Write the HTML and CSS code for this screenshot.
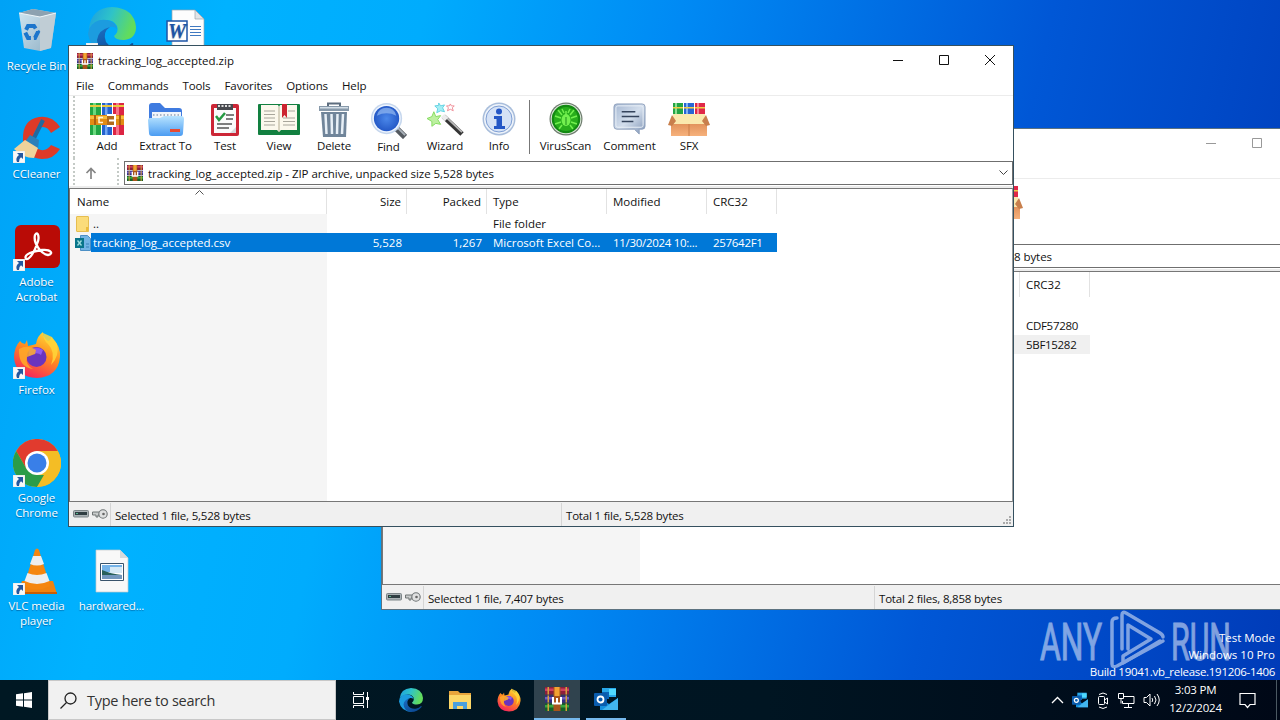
FILE: index.html
```
<!DOCTYPE html>
<html lang="en">
<head>
    <meta charset="UTF-8">
    <meta name="viewport" content="width=device-width, initial-scale=1.0">
    <title>tracking_log_accepted.zip</title>
    <link rel="stylesheet" href="styles.css">
</head>
<body>
    <!-- shared icons -->
    <svg class="defs" width="0" height="0">
        <defs>
            <linearGradient id="g-edge" x1="0" y1="0" x2="1" y2="0.3">
                <stop offset="0" stop-color="#1b9de2"/><stop offset="0.5" stop-color="#2fc3c8"/><stop offset="1" stop-color="#62dc5c"/>
            </linearGradient>
            <linearGradient id="g-edge2" x1="0" y1="0" x2="0.6" y2="1">
                <stop offset="0" stop-color="#1b6fc4"/><stop offset="1" stop-color="#0c4a94"/>
            </linearGradient>
            <linearGradient id="g-fox" x1="0.8" y1="0" x2="0.3" y2="1">
                <stop offset="0" stop-color="#ffe03c"/><stop offset="0.45" stop-color="#ff8f1f"/><stop offset="1" stop-color="#f5235c"/>
            </linearGradient>
            <linearGradient id="g-folder" x1="0" y1="0" x2="0" y2="1">
                <stop offset="0" stop-color="#b8e4ff"/><stop offset="1" stop-color="#4b9cf2"/>
            </linearGradient>
            <linearGradient id="g-steel" x1="0" y1="0" x2="1" y2="1">
                <stop offset="0" stop-color="#a4b7d2"/><stop offset="0.5" stop-color="#d3deec"/><stop offset="1" stop-color="#7e93b4"/>
            </linearGradient>
            <linearGradient id="g-box" x1="0" y1="0" x2="0" y2="1">
                <stop offset="0" stop-color="#e2935c"/><stop offset="1" stop-color="#f6b17c"/>
            </linearGradient>
            <radialGradient id="g-lens" cx="0.5" cy="0.5" r="0.6">
                <stop offset="0" stop-color="#4b88ea"/><stop offset="1" stop-color="#1d50c0"/>
            </radialGradient>
            <linearGradient id="g-bin" x1="0" y1="0" x2="1" y2="1">
                <stop offset="0" stop-color="#e8eef2"/><stop offset="1" stop-color="#9fb0bd"/>
            </linearGradient>
        </defs>
        <symbol id="i-rar" viewBox="0 0 24 24">
            <path fill="#8c1f3e" d="M0 0h24v7.500H0z"/><path fill="#d0405f" d="M0 1.500h24v2.500H0z"/>
            <path fill="#332f80" d="M0 8.500h24v7H0z"/><path fill="#6e5cc4" d="M0 10h24v2.500H0z"/>
            <path fill="#14602a" d="M0 16.500h24V24H0z"/><path fill="#38a83c" d="M0 18h24v2.500H0z"/>
            <path fill="#d5a03c" d="M2.500 0h1.500v7.500H2.500zM2.500 8.500h1.500v7H2.500zM2.500 16.500h1.500V24H2.500zM20.500 0h1.500v7.500h-1.500zM20.500 8.500h1.500v7h-1.500zM20.500 16.500h1.500V24h-1.500z"/>
            <path fill="#a8541a" d="M8.500 0h7v24h-7z"/><path fill="#f2a232" d="M9.500 0h5v9h-5z"/>
            <path fill="none" stroke="#fff" stroke-width="2" d="M8 10v6.500h8V10M12 11v5"/>
        </symbol>
        <symbol id="i-add" viewBox="0 0 34 34">
            <path fill="#22a544" d="M0 1h11v32H0z"/><path fill="#6bd97e" d="M3 1h3v32H3z"/>
            <path fill="#2462cf" d="M12 1h10v32H12z"/><path fill="#70a6f2" d="M15 1h2.500v32H15z"/>
            <path fill="#dc2443" d="M23 1h11v32H23z"/><path fill="#f5718a" d="M26 1h3v32h-3z"/>
            <path fill="#e9c83d" d="M0 3h11v2H0zM12 3h10v2H12zM23 3h11v2H23z"/>
            <path fill="#e28b14" d="M0 13h34v10H0z"/><path fill="#f9bd3e" d="M0 14h34v3H0z"/>
            <path fill="#ad5f0e" d="M4 13h2v10H4zM29 13h2v10h-2z"/>
            <path fill="none" stroke="#fff3d5" stroke-width="1.500" d="M13 15.500H9v5h4"/><path fill="#b06a1c" d="M17 13h8v10h-8z"/>
            <path fill="none" stroke="#fff" stroke-width="2" d="M17 13h8v11h-8M19 18.500h5"/>
        </symbol>
        <symbol id="i-extract" viewBox="0 0 36 34">
            <path fill="#3f7be0" d="M1 31V4q0-3 3-3h8l5 5h14q3 0 3 3v20z"/>
            <path fill="#f1f5fa" d="M4 10h29v13H4z"/><path stroke="#aab6c6" stroke-width="2" stroke-dasharray="1.500 2" d="M5 13h27"/>
            <path fill="url(#g-folder)" d="M0 18q0-2 2-2h10l4-2h17q3 0 3 3l-1 14q0 3-3 3H4q-3 0-3-3z"/>
            <path fill="#e64a33" d="M22 27h10v3H22z"/>
        </symbol>
        <symbol id="i-test" viewBox="0 0 32 34">
            <rect x="2" y="2" width="28" height="32" rx="2" fill="#cc2636"/>
            <path fill="#fbfbfb" d="M5 6h22v25H5z"/><path fill="#d5d9dd" d="M21 31l6-6v6z"/>
            <path fill="#47494e" d="M8 2h16v6H8z"/><path stroke="#ddd" stroke-width="2" stroke-dasharray="2 1.500" d="M9 4h14"/>
            <path fill="none" stroke="#259a42" stroke-width="2.500" d="M7 14l3 4 6-7"/>
            <path stroke="#555" stroke-width="1.300" d="M17 13h8M17 17h7M8 22h15M8 26h12"/>
        </symbol>
        <symbol id="i-view" viewBox="0 0 42 34">
            <rect y="2" width="42" height="31" rx="1" fill="#128040"/>
            <path fill="#fbf8ec" d="M3 3h17l1 2 1-2h17v25H23l-2 2-2-2H3z"/>
            <path stroke="#a8a69b" stroke-width="1" d="M6 9h11M6 12.500h11M6 16h11M6 19.500h11M6 23h11M30 9h7M25 16h12M25 19.500h12M25 23h12"/>
            <path stroke="#b4ad92" d="M21 5v25"/><path fill="#cc2430" d="M24 2h5v14l-2.500-3-2.500 3z"/>
        </symbol>
        <symbol id="i-delete" viewBox="0 0 32 36">
            <path fill="none" stroke="#5d6d7e" stroke-width="2" d="M10 4V1.500h12V4"/>
            <path fill="#8799aa" d="M1 4h30v5H1z"/><path fill="#d2dde6" d="M2 5h28v1.500H2z"/>
            <path fill="#70859a" d="M3 10h26l-1 25H5z"/>
            <path stroke="#e8f0f7" stroke-width="2.500" d="M7.500 12l1 20M13.500 12l.5 20M19.500 12l-.5 20M25 12l-1 20"/>
        </symbol>
        <symbol id="i-find" viewBox="0 0 38 38">
            <path stroke="#555a60" stroke-width="6" d="M26 26l10 10"/><path stroke="#aab2ba" stroke-width="2" d="M27 25l9 9"/>
            <circle cx="17" cy="17" r="16" fill="#c5d6ed"/><circle cx="17" cy="17" r="14.500" fill="#eef5ff"/>
            <circle cx="17" cy="17" r="13" fill="url(#g-lens)"/><path fill="#a5c8f7" opacity=".6" d="M7 14q2-8 10-8t10 8q-10-5-20 0z"/>
        </symbol>
        <symbol id="i-wizard" viewBox="0 0 38 36">
            <path stroke="#353535" stroke-width="5" d="M17 15l19 18"/><path stroke="#b8b8b8" stroke-width="2" d="M18 14l18 17"/><path stroke="#ececec" stroke-width="5" d="M16 14l4 4"/>
            <path fill="#bcf0a0" stroke="#86dc62" d="M7 10l2 5 5-1-3 4 3 5-5-1-4 3v-5l-5-3 5-2z"/>
            <path fill="#a5eff5" stroke="#62d2e2" d="M12 1l2 3 4-1-2 3 2 4-4-1-4 2 1-4-3-3 4-.5z"/>
            <path fill="#fff" stroke="#ef8d98" d="M24 2l1 2h3l-2 2 1 3-3-1.500L21 9l1-3-2-2h3z"/>
        </symbol>
        <symbol id="i-info" viewBox="0 0 34 34">
            <circle cx="17" cy="17" r="16.500" fill="#a8bddb"/><circle cx="17" cy="17" r="15" fill="#eef3fa"/><circle cx="17" cy="17" r="13" fill="#d5e2f6" stroke="#7f9fd4"/>
            <circle cx="17" cy="9.500" r="3" fill="#2457c6"/><path fill="#2457c6" d="M12 14h8v10h3v3H12v-3h2.500v-7H12z"/>
        </symbol>
        <symbol id="i-virus" viewBox="0 0 34 34">
            <circle cx="17" cy="17" r="16.500" fill="#6d7c6d"/><circle cx="17" cy="17" r="15.300" fill="#e2eae0"/><circle cx="17" cy="17" r="14.300" fill="#138a12"/><circle cx="17" cy="17" r="12" fill="#28ae1c"/>
            <path fill="none" stroke="#73f04f" stroke-width="1.500" d="M17 9v4M13 7l2 4M21 7l-2 4M6 14l6 2M28 14l-6 2M6 22l6-2M28 22l-6-2M9 8l4 5M25 8l-4 5M10 27l3-4M24 27l-3-4"/>
            <ellipse cx="17" cy="18" rx="4.500" ry="6" fill="#73f04f"/><path stroke="#1b8d18" d="M17 15v8"/>
        </symbol>
        <symbol id="i-comment" viewBox="0 0 34 34">
            <path fill="url(#g-steel)" stroke="#8ea0bc" d="M4 2h26q3 0 3 3v20q0 3-3 3h-3v5l-5-5H4q-3 0-3-3V5q0-3 3-3z"/>
            <path fill="none" stroke="#e9eff7" d="M5 4h24q2 0 2 2v18q0 2-2 2H5q-2 0-2-2V6q0-2 2-2z"/>
            <path stroke="#35445c" stroke-width="1.600" d="M9 10h14M9 15h18M9 20h12"/>
        </symbol>
        <symbol id="i-sfx" viewBox="0 0 42 34">
            <path fill="#23a545" d="M5 1h10v14H5z"/><path fill="#2866d4" d="M16 1h10v14H16z"/><path fill="#e02848" d="M27 1h10v14H27z"/>
            <path fill="#8cdf93" d="M7 1h2v12H7z"/><path fill="#81b1f2" d="M18 1h2v12h-2z"/><path fill="#f58296" d="M29 1h2v12h-2z"/><path fill="#f2cc48" d="M5 5h10v1.500H5zM16 5h10v1.500H16zM27 5h10v1.500H27z"/>
            <path fill="#fae9ae" d="M5 12h32v10H5z"/>
            <path fill="url(#g-box)" d="M3 22h36v12H3z"/><path fill="#c87f4c" d="M4 13L0 23l4 1 4-5zM38 13l4 10-4 1-4-5z"/><path stroke="#c97c49" d="M21 22v12"/>
        </symbol>
        <symbol id="i-disk" viewBox="0 0 16 8">
            <rect x=".5" y=".5" width="15" height="6.500" rx="1" fill="#aab2b5" stroke="#7d8588"/><path fill="#2f3d42" d="M2 2h12v3H2z"/><path fill="#55b58a" d="M3 3h2v1H3z"/>
        </symbol>
        <symbol id="i-key" viewBox="0 0 16 10">
            <path fill="#c9cccc" stroke="#6f7475" d="M.5 3h8v3H6v2H4V6H.5z"/><circle cx="11" cy="5" r="4.200" fill="#dfe0e0" stroke="#6f7475" stroke-width="1.100"/><circle cx="11.500" cy="5" r="1.300" fill="#666"/>
        </symbol>
        <symbol id="i-shortcut" viewBox="0 0 12 12">
            <path fill="#f8f8f8" stroke="#d4d4d4" stroke-width=".5" d="M0 0h12v12H0z"/><path fill="#24579e" d="M4 2h6v6L8 6.200Q5.500 8 6 11H4Q2 7 6 4z"/>
        </symbol>
        <symbol id="i-edge" viewBox="0 0 48 48">
            <path fill="url(#g-edge)" d="M1 22Q3 1 24 0q22 1 24 20 0 12-12 13-9 0-10-4 5-4 3-10-4-7-12-6Q5 14 1 22z"/>
            <path fill="#1c9cdf" d="M1 22q6-11 18-9 9 2 10 9-3-3-7-2-8 3-8 12 2 12 13 16Q4 48 0 27z"/>
            <path fill="url(#g-edge2)" d="M22 20q-8 5-4 15 6 8 17 6 5-1 9-5 2 0 1 2-8 10-21 10-14-2-15-15 1-10 13-13z"/>
        </symbol>
        <symbol id="i-firefox" viewBox="0 0 48 48">
            <path fill="url(#g-fox)" d="M7 10q2 3 5 3l2-4 1 6q5-1 8-2 1-8 7-12 0 6 5 9 3-1 3-4 10 9 9 20-2 20-23 21Q3 46 1 27q0-11 6-17z"/>
            <circle cx="23.500" cy="26" r="10" fill="#6a34bd"/><path fill="#9059ee" d="M16 19q8-5 14 0l-2 5q-4-4-12 1z"/>
            <path fill="#ffac28" d="M6 18q9-5 17 1l-1 4-8 3q-2 8 6 12Q5 36 6 18z" opacity=".85"/>
            <path fill="#ffd63a" d="M30 2q0 7 5 11 8 8 3 21 9-9 6-21l-5-7z" opacity=".85"/>
        </symbol>
        <symbol id="i-outlook" viewBox="0 0 24 24">
            <path fill="#28a8ea" d="M8 1h14v9H8z"/><path fill="#0a64b8" d="M8 5h7v7H8z"/><path fill="#50d9ff" d="M15 2h7v6h-7z"/>
            <path fill="#1490df" d="M6 11l9 6 9-6v12H6z"/><path fill="#42b5ee" d="M24 11v12H8z"/>
            <rect y="6" width="13" height="13" rx="1" fill="#0a5cad"/><circle cx="6.500" cy="12.500" r="3" fill="none" stroke="#fff" stroke-width="1.800"/>
        </symbol>
    </svg>

    <main class="desktop">
        <div class="shortcuts">
            <div class="shortcut">
                <svg width="48" height="48" viewBox="0 0 48 48">
                    <path fill="url(#g-bin)" opacity=".9" d="M6 6l14-4 23 4-5 35-11 3-16-3z"/><path fill="#8da2b1" d="M6 6l14-4 23 4-16 4z"/><path fill="#c0cdd5" d="M27 10l16-4-5 35-11 3z"/>
                    <path fill="none" stroke="#1b75cc" stroke-width="4" stroke-dasharray="9 3" d="M15 19h6l4 6-3 6h-7l-3-6z"/>
                    <path fill="none" stroke="#eff6fa" d="M6 6l21 4 16-4"/>
                </svg>
                <span>Recycle Bin</span>
            </div>
            <div class="shortcut">
                <svg width="48" height="48" viewBox="0 0 48 48">
                    <path fill="#dd3a28" d="M47 12Q39 0 26 2 9 5 10 25q2 18 19 19 12 0 18-10l-9-4q-4 6-10 5-8-2-8-11 1-12 10-12 5 0 8 6z"/>
                    <path stroke="#22699e" stroke-width="4" d="M30 5L20 25"/><path fill="#2c80b9" d="M17 20l9 5-1 9-13-7z"/><path fill="#efd39b" d="M12 25l13 8-4 10Q10 43 1 34z"/>
                </svg>
                <svg class="arrow" width="12" height="12"><use href="#i-shortcut"/></svg>
                <span>CCleaner</span>
            </div>
            <div class="shortcut">
                <svg width="48" height="48" viewBox="0 0 48 48">
                    <rect x="2" y="2" width="45" height="43" rx="6" fill="#b90b06"/>
                    <path fill="none" stroke="#fff" stroke-width="2.300" d="M13 36c-3-5 8-8 16-9 9-1 12 4 6 5C28 31 20 20 22 12c3-5 5 3 2 9-2 6-7 16-11 15z"/>
                </svg>
                <svg class="arrow" width="12" height="12"><use href="#i-shortcut"/></svg>
                <span>Adobe<br>Acrobat</span>
            </div>
            <div class="shortcut">
                <svg width="48" height="48"><use href="#i-firefox"/></svg>
                <svg class="arrow" width="12" height="12"><use href="#i-shortcut"/></svg>
                <span>Firefox</span>
            </div>
            <div class="shortcut">
                <svg width="48" height="48" viewBox="0 0 48 48">
                    <circle cx="24" cy="24" r="24" fill="#f4bd25"/>
                    <path fill="#e13b2e" d="M3.200 12A24 24 0 0 1 44.800 12H24L13.600 30z"/><path fill="#2b9c49" d="M3.200 12L13.600 30 24 36h10.400L24 48A24 24 0 0 1 3.200 12z"/>
                    <path fill="#f4bd25" d="M24 12h20.800A24 24 0 0 1 24 48l10.400-18z"/>
                    <circle cx="24" cy="24" r="12" fill="#fff"/><circle cx="24" cy="24" r="9.500" fill="#397fe8"/>
                </svg>
                <svg class="arrow" width="12" height="12"><use href="#i-shortcut"/></svg>
                <span>Google<br>Chrome</span>
            </div>
            <div class="shortcut">
                <svg width="48" height="48" viewBox="0 0 48 48">
                    <path fill="#f08310" d="M9 34h31l4 13H4z"/><path fill="#c75e07" d="M4 45h40v2H4z"/>
                    <path fill="#f5860f" d="M22 3q2-3 4 0l11 36q-13 7-26 0z"/><path fill="#eee" d="M20 9h8l3 8q-7 3-14 0zM14.500 26q9.500 4 19 0l3 8q-12.500 6-25 0z"/>
                </svg>
                <svg class="arrow" width="12" height="12"><use href="#i-shortcut"/></svg>
                <span>VLC media<br>player</span>
            </div>
            <div class="shortcut">
                <svg width="48" height="48"><use href="#i-edge"/></svg>
                <svg class="arrow" width="12" height="12"><use href="#i-shortcut"/></svg>
            </div>
            <div class="shortcut hardware">
                <svg width="48" height="48" viewBox="0 0 48 48">
                    <path fill="#f8f8f8" stroke="#c2c8cc" stroke-width=".7" d="M8 3h24l8 8v34H8z"/><path fill="#d5dadd" d="M32 3v8h8z"/>
                    <path fill="#fff" stroke="#39536b" d="M12.500 16.500h23v17h-23z"/><path fill="#75b3e8" d="M14 18h20v7H14z"/><path fill="#d6e9f5" d="M22 20h12v6H22z"/><path fill="#28605a" d="M14 23q9 4 20 5H14z"/><path fill="#7397bd" d="M14 28h20v4H14z"/>
                </svg>
                <span>hardwared...</span>
            </div>
            <div class="shortcut word">
                <svg width="48" height="48" viewBox="0 0 48 48">
                    <path fill="#fdfdfd" stroke="#9aa4ae" stroke-width=".7" d="M11 3h23l9 9v36H11z"/><path fill="#e1e4e7" stroke="#9aa4ae" stroke-width=".7" d="M34 3v9h9z"/>
                    <path stroke="#3f78c0" d="M29 19.500h11M29 22.500h11M29 25.500h11M29 28.500h11"/>
                    <path fill="#fff" stroke="#1d54a6" stroke-width="1.500" d="M6 14h20v20H6z"/>
                    <text class="word-letter" x="7" y="31" textLength="18" lengthAdjust="spacingAndGlyphs">W</text>
                </svg>
            </div>
        </div>

        <svg class="watermark" width="196" height="62">
            <text x="1" y="51" textLength="62" lengthAdjust="spacingAndGlyphs">ANY</text>
            <text x="132" y="51" textLength="60" lengthAdjust="spacingAndGlyphs">RUN</text>
            <g fill="none" stroke="#fff" stroke-width="3.500" stroke-linejoin="round" stroke-linecap="round">
                <path d="M78 9q-5 0-5 4v42q0 4 5 2l46-25"/><path d="M83 40V6q0-4 4-2l34 20q3 2 3 4M121 32L84 54V47l28-17-23-14v24"/>
            </g>
        </svg>
        <div class="build">
            <div class="mode">Test Mode</div>
            <div class="edition">Windows 10 Pro</div>
            <div class="version">Build 19041.vb_release.191206-1406</div>
        </div>

        <section class="window back">
            <header class="titlebar">
                <div class="controls">
                    <svg width="12" height="12"><path d="M1 5.500h10"/></svg>
                    <svg width="12" height="12"><path d="M1.500 .5h9v9h-9z"/></svg>
                    <svg width="12" height="12"><path d="M1 1l10 10M11 1L1 11"/></svg>
                </div>
            </header>
            <nav class="menu"></nav>
            <div class="toolbar">
                <div class="tool sfx"><svg width="42" height="34"><use href="#i-sfx"/></svg></div>
            </div>
            <div class="address">
                <div class="path"><span class="path-end">8 bytes</span></div>
            </div>
            <div class="list">
                <div class="row head">
                    <span></span><span></span><span></span><span></span><span></span><span class="crc">CRC32</span>
                </div>
                <div class="row"></div>
                <div class="row"><span class="crc">CDF57280</span></div>
                <div class="row inactive"><span class="crc">5BF15282</span></div>
            </div>
            <footer class="status">
                <div class="status-icons">
                    <svg width="16" height="8"><use href="#i-disk"/></svg>
                    <svg width="16" height="10"><use href="#i-key"/></svg>
                </div>
                <div class="selected-info">Selected 1 file, 7,407 bytes</div>
                <div class="total-info">Total 2 files, 8,858 bytes</div>
            </footer>
        </section>

        <section class="window front">
            <header class="titlebar">
                <svg width="16" height="16"><use href="#i-rar"/></svg>
                <span class="title">tracking_log_accepted.zip</span>
                <div class="controls">
                    <svg width="12" height="12"><path d="M1 5.500h10"/></svg>
                    <svg width="12" height="12"><path d="M1.500 .5h9v9h-9z"/></svg>
                    <svg width="12" height="12"><path d="M1 0l10 10M11 0L1 10"/></svg>
                </div>
            </header>
            <nav class="menu">
                <span>File</span><span>Commands</span><span>Tools</span><span>Favorites</span><span>Options</span><span>Help</span>
            </nav>
            <div class="toolbar">
                <div class="tool add"><svg width="34" height="34"><use href="#i-add"/></svg><span>Add</span></div>
                <div class="tool extract"><svg width="36" height="34"><use href="#i-extract"/></svg><span>Extract To</span></div>
                <div class="tool test"><svg width="32" height="34"><use href="#i-test"/></svg><span>Test</span></div>
                <div class="tool view"><svg width="42" height="34"><use href="#i-view"/></svg><span>View</span></div>
                <div class="tool delete"><svg width="32" height="36"><use href="#i-delete"/></svg><span>Delete</span></div>
                <div class="tool find"><svg width="37" height="37"><use href="#i-find"/></svg><span>Find</span></div>
                <div class="tool wizard"><svg width="37" height="35"><use href="#i-wizard"/></svg><span>Wizard</span></div>
                <div class="tool info"><svg width="34" height="34"><use href="#i-info"/></svg><span>Info</span></div>
                <div class="separator"></div>
                <div class="tool virus"><svg width="34" height="34"><use href="#i-virus"/></svg><span>VirusScan</span></div>
                <div class="tool comment"><svg width="33" height="33"><use href="#i-comment"/></svg><span>Comment</span></div>
                <div class="tool sfx"><svg width="42" height="34"><use href="#i-sfx"/></svg><span>SFX</span></div>
            </div>
            <div class="address">
                <div class="up">
                    <svg width="12" height="12"><path fill="none" stroke="#858585" stroke-width="1.700" d="M6 12V1.500M1.500 6L6 1.500 10.500 6"/></svg>
                </div>
                <div class="path">
                    <svg width="16" height="16"><use href="#i-rar"/></svg>
                    <span class="path-text">tracking_log_accepted.zip - ZIP archive, unpacked size 5,528 bytes</span>
                    <svg class="drop" width="9" height="6"><path fill="none" stroke="#444" d="M.5.5l4 4 4-4"/></svg>
                </div>
            </div>
            <div class="list">
                <div class="row head">
                    <span>Name<svg class="sort" width="9" height="5"><path fill="none" stroke="#555" d="M.5 4.500l4-4 4 4"/></svg></span>
                    <span>Size</span><span>Packed</span><span>Type</span><span>Modified</span><span class="crc">CRC32</span>
                </div>
                <div class="row">
                    <span><svg width="14" height="16"><path fill="#fbdc7a" stroke="#e6be50" d="M.5 1q0-.5.500-.5h11q.5 0 .5.500v14.500H1q-.5 0-.5-.5z"/><path fill="#edbc39" d="M10 11h2v4h-2z"/></svg><b class="up-dir">..</b></span>
                    <span></span><span></span><span>File folder</span><span></span><span></span>
                </div>
                <div class="row selected">
                    <span><svg width="16" height="16"><path fill="#73b5e5" stroke="#4c8fc5" d="M5.500.5h7l3 3v12h-10z"/><path fill="#08758a" d="M0 3h9v10H0z"/><path stroke="#9fdedf" stroke-width="1.300" d="M2.500 5.500l4 5M6.500 5.500l-4 5"/><path stroke="#3983ba" d="M11 9h3M11 12h3"/></svg><em class="csv">tracking_log_accepted.csv</em></span>
                    <span>5,528</span><span>1,267</span><span class="type">Microsoft Excel Co...</span><span class="date">11/30/2024 10:...</span><span class="crc">257642F1</span>
                </div>
            </div>
            <footer class="status">
                <div class="status-icons">
                    <svg width="16" height="8"><use href="#i-disk"/></svg>
                    <svg width="16" height="10"><use href="#i-key"/></svg>
                </div>
                <div class="selected-info">Selected 1 file, 5,528 bytes</div>
                <div class="total-info">Total 1 file, 5,528 bytes</div>
                <svg class="grip" width="10" height="10"><path stroke="#aaa" stroke-width="2" stroke-dasharray="2 1" d="M8 1v9M5 4v6M2 7v3"/></svg>
            </footer>
        </section>
    </main>

    <footer class="taskbar">
        <div class="start"><svg width="16" height="16"><path fill="#fff" d="M0 2.300L7 1.300V7.500H0zM8 1.200L16 0V7.500H8zM0 8.500h7v6.200L0 13.700zM8 8.500h8V16L8 14.800z"/></svg></div>
        <div class="search">
            <svg width="17" height="17"><g fill="none" stroke="#222" stroke-width="1.300"><circle cx="10.500" cy="6.500" r="5.500"/><path d="M6.500 10.500L.5 16.500"/></g></svg>
            <span>Type here to search</span>
        </div>
        <div class="app task-view"><svg width="17" height="16"><g fill="none" stroke="#fff"><path d="M.5 0v2.500h10V0M.5 4.500h10v7H.5zM.5 16v-2.500h10V16M14.500 0v16"/></g><path fill="#fff" d="M13 5h3v3h-3z"/></svg></div>
        <div class="app"><svg width="24" height="24"><use href="#i-edge"/></svg></div>
        <div class="app">
            <svg width="22" height="20"><path fill="#e8a53c" d="M0 1h9l2 2h11v5H0z"/><path fill="#fcd768" d="M0 5h22v14H0z"/><path fill="#4a9fdd" d="M4 12h14v7h-4v-3H8v3H4z"/></svg>
        </div>
        <div class="app"><svg width="24" height="24"><use href="#i-firefox"/></svg></div>
        <div class="app active"><svg width="24" height="24"><use href="#i-rar"/></svg></div>
        <div class="app running"><svg width="24" height="24"><use href="#i-outlook"/></svg></div>
        <div class="tray">
            <svg width="13" height="8"><path fill="none" stroke="#fff" stroke-width="1.300" d="M1 7l5.500-5.500L12 7"/></svg>
            <svg width="16" height="16"><use href="#i-outlook"/></svg>
            <svg width="14" height="17"><g fill="none" stroke="#fff"><rect x="2.500" y="4.500" width="6" height="8" rx="1"/><path d="M8.500 8l3-2v6l-3-2M3 2.500q4-3 8 0M3 15q4 3 8 0"/></g></svg>
            <svg width="17" height="15"><g fill="none" stroke="#fff"><path d="M6 3.500h10v7H4.500V8M10.500 11v3M6 14.500h8M.5.5h5v5h-5zM3 5.500v5"/></g></svg>
            <svg width="18" height="14"><g fill="none" stroke="#fff"><path d="M1 4.500h2.500L7 1v12L3.500 9.500H1zM9 5q1.500 2 0 4M11.500 3q3 4 0 8M14 1q4.500 6 0 12"/></g></svg>
        </div>
        <div class="clock">3:03 PM<br>12/2/2024</div>
        <div class="notify"><svg width="17" height="17"><path fill="none" stroke="#fff" stroke-width="1.200" d="M1 1.500h15v11h-5L8.500 15.500 6 12.500H1z"/></svg></div>
    </footer>
</body>
</html>
```
FILE: styles.css
```
* {
    box-sizing: border-box;
}

body {
    margin: 0;
    width: 1280px;
    height: 720px;
    overflow: hidden;
    font-family: "Open Sans", "Noto Sans", sans-serif;
    font-size: 11.5px;
    line-height: 15px;
    color: #111;
    display: flex;
    flex-direction: column;
}

svg {
    display: block;
    flex: none;
}

.defs {
    position: absolute;
}

.desktop {
    position: relative;
    height: 680px;
    overflow: hidden;
    background: linear-gradient(102deg, #00a2f6 0%, #00b2ff 16%, #00acfd 30%, #008af4 48%, #0057d6 74%, #003bb8 100%);
}

/* desktop icons */
.shortcuts {
    display: grid;
    grid-template-columns: 73px 77px 69px;
    grid-template-rows: repeat(6, 108px);
    grid-auto-flow: column;
    padding-top: 7px;
}

.shortcut {
    position: relative;
    display: flex;
    flex-direction: column;
    align-items: center;
    gap: 3px;
    color: #fff;
    text-align: center;
    white-space: nowrap;
    letter-spacing: -0.05px;
    text-shadow: 0 1px 1px rgba(0, 40, 90, 0.5);
}

.shortcut .arrow {
    position: absolute;
    left: 13px;
    top: 36px;
}

.hardware {
    grid-row: 6;
    grid-column: 2;
    letter-spacing: -0.2px;
}

.word {
    grid-row: 1;
    grid-column: 3;
}

.word-letter {
    font: italic bold 20px "Liberation Serif", serif;
    fill: #1d54a6;
}

/* archive windows */
.window {
    position: absolute;
    width: 946px;
    height: 482px;
    display: flex;
    flex-direction: column;
    background: #fff;
    border: 1px solid #35505f;
}

.front {
    left: 68px;
    top: 45px;
}

.back {
    left: 381px;
    top: 128px;
    border-color: #5c7280;
}

.titlebar {
    display: flex;
    align-items: center;
    height: 29px;
    padding-left: 8px;
    gap: 5px;
}

.controls {
    display: flex;
    gap: 34px;
    margin-left: auto;
    padding-right: 17px;
}

.controls path {
    fill: none;
    stroke: #111;
}

.back .controls path {
    stroke: #999;
}

.menu {
    display: flex;
    align-items: center;
    gap: 14px;
    height: 21px;
    padding-left: 7px;
    border-bottom: 1px solid #ececec;
    letter-spacing: -0.1px;
}

.toolbar {
    display: flex;
    height: 62px;
    margin-left: 4px;
    padding: 6px 0 0 7px;
    border-left: 2px dotted #c4cac6;
    letter-spacing: -0.08px;
}

.tool {
    display: flex;
    flex-direction: column;
    align-items: center;
    justify-content: space-between;
    height: 51px;
    width: 52px;
    white-space: nowrap;
}

.add {
    width: 50px;
}

.extract {
    width: 67px;
}

.view,
.find,
.wizard {
    width: 56px;
}

.delete {
    width: 54px;
}

.virus {
    width: 61px;
}

.comment {
    width: 67px;
}

.find {
    padding-right: 1px;
}

.separator {
    width: 1px;
    height: 54px;
    margin: -2px 5px 0 4px;
    background: #777;
}

.back .toolbar {
    padding-left: 588px;
}

.address {
    display: flex;
    height: 27px;
    margin-left: 4px;
    border-left: 2px dotted #c4cac6;
}

.up {
    width: 44px;
    padding: 9px 0 0 10px;
    border-right: 2px dotted #c4cac6;
}

.path {
    display: flex;
    flex: 1;
    align-items: center;
    gap: 5px;
    height: 24px;
    margin: 3px 0 0 5px;
    padding: 0 4px 0 2px;
    border: 1px solid #6f6f6f;
    letter-spacing: -0.06px;
}

.back .path {
    margin-left: 49px;
    padding-left: 576px;
}

.drop {
    margin-left: auto;
}

.list {
    flex: 1;
    border: 1px solid #777;
    border-right-color: #999;
    margin-top: 3px;
    box-shadow: 0 -2px 0 #ececec;
    background: linear-gradient(to right, #f5f5f5 257px, #fff 257px);
}

.row {
    display: grid;
    grid-template-columns: 257px 80px 80px 120px 100px 70px;
    height: 19px;
    width: 707px;
    align-items: center;
    white-space: nowrap;
}

.row > span {
    display: flex;
    align-items: center;
    padding-left: 6px;
}

.row > span:nth-child(2),
.row > span:nth-child(3) {
    justify-content: flex-end;
    padding: 0 5px 0 0;
}

.row > span.crc {
    grid-column: 6;
    justify-content: flex-start;
    padding-left: 6px;
}

.row:not(.head) .crc,
.date {
    letter-spacing: -0.3px;
}

.head {
    position: relative;
    height: 25px;
    width: auto;
    background: #fff;
}

.head > span {
    height: 25px;
    border-right: 1px solid #e2e2e2;
}

.row.head > span:first-child {
    padding-left: 7px;
}

.sort {
    position: absolute;
    left: 125px;
    top: 1px;
}

.row .up-dir {
    margin-left: 3px;
    font-weight: normal;
}

.selected > span {
    height: 19px;
    color: #fff;
    background: #0078d7;
}

.selected > span:first-child {
    background: none;
    padding-left: 5px;
}

.csv {
    flex: 1;
    height: 19px;
    padding: 2px 0 0 2px;
    font-style: normal;
    background: #0078d7;
}

.inactive {
    background: #f0f0f0;
}

.status {
    display: flex;
    height: 24px;
    padding-top: 1px;
    background: #f0f0f0;
    line-height: 26px;
    letter-spacing: -0.19px;
}

.status-icons {
    display: flex;
    align-items: center;
    gap: 3px;
    width: 42px;
    padding: 0 0 2px 4px;
    border-right: 1px solid #d5d5d5;
}

.selected-info {
    width: 451px;
    padding-left: 4px;
    border-right: 1px solid #d5d5d5;
}

.total-info {
    padding-left: 4px;
}

.grip {
    margin: 12px 1px 0 auto;
}

/* build label */
.watermark {
    position: absolute;
    left: 1039px;
    top: 609px;
    opacity: 0.5;
}

.watermark text {
    font: 52px Roboto, sans-serif;
    fill: #fff;
    stroke: #fff;
    stroke-width: 1px;
}

.build {
    position: absolute;
    right: 5px;
    top: 629px;
    line-height: 17px;
    color: #fff;
    text-align: right;
    white-space: nowrap;
}

.version {
    letter-spacing: -0.3px;
}

/* taskbar */
.taskbar {
    display: flex;
    height: 40px;
    color: #fff;
    background: linear-gradient(to right, #001823, #001522 60%, #000817);
}

.start {
    width: 48px;
    padding: 12px 0 0 16px;
}

.search {
    display: flex;
    align-items: center;
    gap: 10px;
    width: 288px;
    padding-left: 11px;
    font-size: 14.5px;
    letter-spacing: -0.28px;
    color: #333;
    background: #f1f1f1;
    border: 1px solid #c8c8c8;
}

.app {
    display: flex;
    align-items: center;
    justify-content: center;
    width: 49px;
}

.task-view {
    width: 50px;
}

.active {
    width: 46px;
    margin-left: 1px;
    background: #30434e;
    border-bottom: 2px solid #76b9ed;
}

.running {
    width: 40px;
    margin-left: 6px;
    border-bottom: 2px solid #76b9ed;
}

.tray {
    display: flex;
    align-items: center;
    gap: 8px;
    margin-left: auto;
}

.clock {
    width: 67px;
    margin-left: 1px;
    padding-top: 1px;
    line-height: 18px;
    letter-spacing: -0.2px;
    text-align: center;
}

.notify {
    width: 48px;
    margin-right: 3px;
    padding: 12px 0 0 10px;
    border-right: 1px solid #4b5962;
}
```
